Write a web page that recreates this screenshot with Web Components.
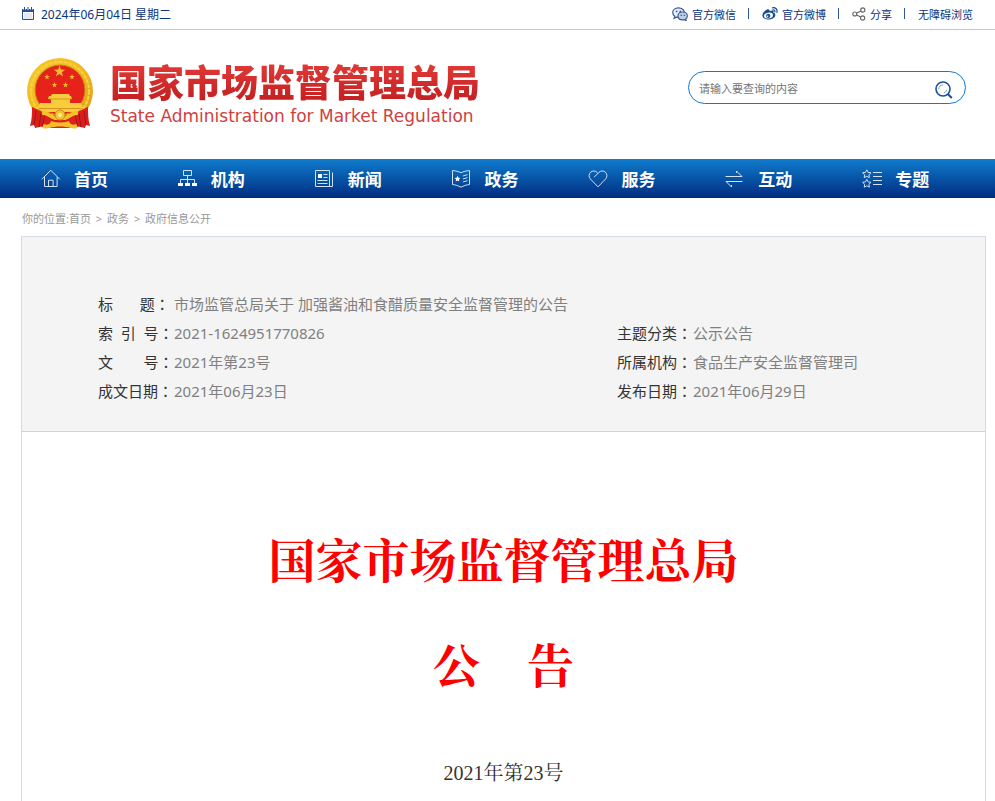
<!DOCTYPE html>
<html lang="zh-CN">
<head>
<meta charset="utf-8">
<meta name="viewport" content="width=device-width, initial-scale=1">
<title>市场监管总局关于 加强酱油和食醋质量安全监督管理的公告</title>
<style>
    html { height: 100%; }
    body {
        margin: 0;
        min-height: 100%;
        display: flex;
        flex-direction: column;
        background: #fff;
        font-family: "Noto Sans", "Noto Sans CJK SC", sans-serif;
        font-size: 11px;
        color: #333;
    }
</style>
</head>
<body>
    <top-bar>
        <span slot="date">2024年06月04日 星期二</span>
        <top-link icon="wechat">官方微信</top-link>
        <top-link icon="weibo">官方微博</top-link>
        <top-link icon="share">分享</top-link>
        <top-link>无障碍浏览</top-link>
    </top-bar>
    <site-header>
        <site-logo>
            <span slot="name">国家市场监督管理总局</span>
            <span slot="english">State Administration for Market Regulation</span>
        </site-logo>
        <site-search slot="search" placeholder="请输入要查询的内容"></site-search>
    </site-header>
    <main-nav>
        <nav-item icon="home">首页</nav-item>
        <nav-item icon="org">机构</nav-item>
        <nav-item icon="news">新闻</nav-item>
        <nav-item icon="gov">政务</nav-item>
        <nav-item icon="heart">服务</nav-item>
        <nav-item icon="swap">互动</nav-item>
        <nav-item icon="topic">专题</nav-item>
    </main-nav>
    <bread-crumb></bread-crumb>
    <notice-page>
        <doc-info slot="info">
            <doc-field class="wide" label="标　&nbsp;&nbsp;&nbsp;题">市场监管总局关于 加强酱油和食醋质量安全监督管理的公告</doc-field>
            <doc-field label="索&nbsp;&nbsp;引&nbsp;&nbsp;号">2021-1624951770826</doc-field>
            <doc-field label="主题分类">公示公告</doc-field>
            <doc-field label="文　&nbsp;&nbsp;&nbsp;&nbsp;号">2021年第23号</doc-field>
            <doc-field label="所属机构">食品生产安全监督管理司</doc-field>
            <doc-field label="成文日期">2021年06月23日</doc-field>
            <doc-field label="发布日期">2021年06月29日</doc-field>
        </doc-info>
        <span slot="title">国家市场监督管理总局</span>
        <span slot="kind">公　告</span>
        <span slot="number">2021年第23号</span>
    </notice-page>

<script>
const icons = {
    calendar: `<svg width="12" height="13" viewBox="0 0 12 13" fill="none">
        <path d="M.5 2.500h11v10H.5z" stroke="#274f93"/>
        <path d="M0 2h12v3H0z" fill="#274f93"/>
        <path d="M2.500 0v3M6 0v3M9.500 0v3" stroke="#fff" stroke-width="2"/>
        <path d="M2.500 0v3M6 0v3M9.500 0v3" stroke="#274f93"/>
        <path d="M2.500 7h7M2.500 9h7M2.500 11h7" stroke="#8fa5ca" stroke-dasharray="1 1"/></svg>`,
    wechat: `<svg width="16" height="14" viewBox="0 0 16 14" fill="#e6ecf5" stroke="#385b94" stroke-width="1.200">
        <path d="M6.500.8C3.200.8.7 2.900.7 5.600c0 1.500.8 2.800 2 3.700l-.6 2 2.200-1.200c.7.2 1.400.3 2.200.3 3.300 0 5.800-2.100 5.800-4.800S9.800.8 6.500.8z"/>
        <path fill="#c3d0e4" d="M10.700 5c-2.700 0-4.700 1.600-4.700 3.900s2 3.900 4.700 3.900c.6 0 1.100-.1 1.600-.2l1.800.9-.4-1.600c1-.7 1.600-1.800 1.600-3C15.300 6.600 13.300 5 10.700 5z"/>
        <g fill="#385b94" stroke="none"><circle cx="4.600" cy="4.300" r=".9"/><circle cx="8.300" cy="4.300" r=".9"/><circle cx="9.200" cy="8.200" r=".8"/><circle cx="12.300" cy="8.200" r=".8"/></g></svg>`,
    weibo: `<svg width="16" height="13" viewBox="0 0 16 13">
        <path fill="#174b92" d="M5.800 2.200C4 2.400.4 5.700.4 8.400c0 2.500 3 4.100 6.100 4.100 4 0 6.900-2.200 6.900-4.500 0-1.300-.9-2-2-2.300.5-1.300.2-2.100-.9-2.200-.8-.1-2 .2-2.900.6C7.700 2.700 7.100 2 5.800 2.200z"/>
        <ellipse cx="6.500" cy="8.600" rx="4.500" ry="2.900" fill="#fff" transform="rotate(-8 6.500 8.600)"/>
        <circle cx="6.200" cy="8.900" r="2.100" fill="#174b92"/><circle cx="5.600" cy="9.200" r=".7" fill="#fff"/>
        <path d="M10.500.8c3-.6 5.200 1.700 4.400 4.600M10.900 2.900c1.400-.2 2.300.8 1.900 2.100" fill="none" stroke="#174b92" stroke-width="1.200" stroke-linecap="round"/></svg>`,
    share: `<svg width="14" height="14" viewBox="0 0 14 14" fill="none" stroke="#666" stroke-width="1.100">
        <circle cx="2.800" cy="7" r="2"/><circle cx="10.800" cy="3" r="2.100"/><circle cx="10.600" cy="11" r="2.100"/>
        <path d="M4.600 6.100l4.300-2.200M4.600 8l4.200 2.100"/></svg>`,
    search: `<svg width="18" height="18" viewBox="0 0 18 18" fill="none" stroke="#1b4f97">
        <circle cx="8" cy="8" r="7" stroke-width="1.600"/>
        <path d="M12.800 13l4 4" stroke-width="2"/>
        <path d="M3.800 8.200c0-2.600 1.600-4.300 4.200-4.400M11.800 8.800c-.4 1.700-1.400 2.600-3 3" stroke="#7d9bc6"/></svg>`,
    home: `<svg viewBox="0 0 20 20"><path d="M.8 10.300L9.800 1.200l9 9.100M3.500 8v9.500h12.600V8M7.500 17.500v-6.300h4.600v6.300"/></svg>`,
    org: `<svg viewBox="0 0 20 20"><path d="M5.500 1.500h8v5h-8zM9.500 6.500v4M2.500 14v-3.500h14V14M9.500 10.500V14"/>
        <path fill="#fff" stroke="none" d="M0 14h5v3H0zM7 14h5v3H7zM14 14h5v3h-5z"/></svg>`,
    news: `<svg viewBox="0 0 20 20"><path d="M.5 1.500h14v16H.5zM14.500 17.500h3v-14M8.500 5.500h4M8.500 8.500h4M2.500 11.500h10M2.500 14.500h10"/>
        <path fill="#fff" stroke="none" d="M3 5h4v4H3z"/></svg>`,
    gov: `<svg viewBox="0 0 20 20"><path d="M.5 1.500c3 .3 6 1 8.500 2.300 2.500-1.300 5.500-2 8.500-2.300v14c-3 .3-5.700 1.200-8.500 2.700-2.800-1.500-5.500-2.400-8.500-2.700zM11 7l4.500-1.400M11 10l4.500-1.400M11 13l4.500-1.400"/>
        <path fill="#fff" stroke="none" d="M5.500 6.800l.9 1.900 2 .3-1.500 1.400.4 2.100-1.800-1-1.800 1 .4-2.100L2.600 9l2-.3z"/></svg>`,
    heart: `<svg viewBox="0 0 20 20"><path d="M10 17.800L2.300 9.900C.6 8 .7 5 2.500 3.300c2-1.900 4.900-1.700 6.700.2L10 4.400l.8-.9c1.800-1.900 4.700-2.100 6.700-.2 1.800 1.700 1.900 4.700.2 6.600zM10 4.400L6.200 8"/></svg>`,
    swap: `<svg viewBox="0 0 20 20"><path d="M.5 7.500h16.500L11.500 2v2M17.500 12.500H1L6.500 18v-2"/></svg>`,
    topic: `<svg viewBox="0 0 20 20"><path d="M4.800.8l1.300 2.600 2.900.4-2.100 2 .5 2.900-2.600-1.400-2.600 1.400.5-2.900-2.100-2 2.900-.4zM4.800 10.300l1.300 2.600 2.900.4-2.100 2 .5 2.900-2.600-1.400-2.600 1.400.5-2.900-2.100-2 2.900-.4z"/>
        <path d="M11 3.500h9M11 7.500h9M11 11.500h9M11 15.500h9"/></svg>`
};

const star = (x, y, r) => {
    const points = [];
    for (let i = 0; i < 10; i++) {
        const a = Math.PI * (i / 5 - 0.5);
        const d = i % 2 ? r * 0.4 : r;
        points.push((x + d * Math.cos(a)).toFixed(2) + ',' + (y + d * Math.sin(a)).toFixed(2));
    }
    return `<polygon points="${points.join(' ')}"/>`;
};

class TopBar extends HTMLElement {
    constructor() {
        super();
        const shadowRoot = this.attachShadow({mode: 'open'});
        shadowRoot.innerHTML = `
        <style>
            :host {
                display: flex;
                justify-content: space-between;
                align-items: center;
                height: 27px;
                padding: 0 22px 2px;
                border-bottom: 1px solid #c8c8c8;
                color: #0a3380;
            }
            .date, nav { display: flex; align-items: center; }
            .date { gap: 7px; font-size: 12px; }
            svg { display: block; }
        </style>
        <div class="date">${icons.calendar}<slot name="date"></slot></div>
        <nav aria-label="快捷链接"><slot></slot></nav>
        `;
    }
}
customElements.define('top-bar', TopBar);

class TopLink extends HTMLElement {
    constructor() {
        super();
        const shadowRoot = this.attachShadow({mode: 'open'});
        shadowRoot.innerHTML = `
        <style>
            :host { display: flex; align-items: center; }
            :host(:not(:first-of-type))::before {
                content: "";
                width: 1px;
                height: 11px;
                margin: 0 13px 0 12px;
                background: #2b5797;
            }
            a {
                display: flex;
                align-items: center;
                gap: 4px;
                color: inherit;
                text-decoration: none;
            }
            svg { display: block; }
        </style>
        <a href="#">${icons[this.getAttribute('icon')] || ''}<span><slot></slot></span></a>
        `;
    }
}
customElements.define('top-link', TopLink);

class SiteHeader extends HTMLElement {
    constructor() {
        super();
        const shadowRoot = this.attachShadow({mode: 'open'});
        shadowRoot.innerHTML = `
        <style>
            :host { display: block; }
            header {
                display: flex;
                justify-content: space-between;
                align-items: flex-start;
                padding: 27px 29px 28px 25px;
            }
            .search { padding-top: 14px; }
        </style>
        <header>
            <slot></slot>
            <div class="search"><slot name="search"></slot></div>
        </header>
        `;
    }
}
customElements.define('site-header', SiteHeader);

class SiteLogo extends HTMLElement {
    constructor() {
        super();
        const shadowRoot = this.attachShadow({mode: 'open'});
        shadowRoot.innerHTML = `
        <style>
            :host { display: flex; gap: 15px; height: 74px; }
            svg { display: block; }
            .text { padding-top: 7px; white-space: nowrap; }
            .name {
                font-family: "Liberation Sans", "Noto Sans CJK SC", sans-serif;
                font-size: 37px;
                line-height: 42px;
                font-weight: 900;
                color: #d42b2b;
                background: linear-gradient(#e03a37, #c01c1f);
                -webkit-background-clip: text;
                background-clip: text;
                -webkit-text-fill-color: transparent;
            }
            .english {
                font-family: "DejaVu Sans", sans-serif;
                font-size: 17px;
                line-height: 20px;
                color: #d04040;
            }
        </style>
        <svg width="70" height="74" viewBox="0 0 70 74" role="img" aria-label="国徽">
            <defs>
                <linearGradient id="gold" x1="0" y1="0" x2="1" y2="1">
                    <stop offset="0" stop-color="#f7c928"/><stop offset=".5" stop-color="#f2b91f"/><stop offset="1" stop-color="#d99a16"/>
                </linearGradient>
            </defs>
            <circle cx="35" cy="34" r="33" fill="url(#gold)"/>
            <circle cx="35" cy="34" r="29" fill="none" stroke="#f8d046" stroke-width="2" stroke-dasharray="4 1"/>
            <circle cx="35" cy="33" r="25" fill="#e5231b" stroke="#c99016"/>
            <g fill="#f0bb2c">${star(34.5, 14.5, 6)}${star(22, 20, 3)}${star(47, 20, 3)}${star(29.5, 28, 3)}${star(40.5, 28, 3)}</g>
            <g fill="#f8cd3b">
                <path d="M27 37h17l1 2H26zM24 39h22l1 3H23zM26 42h19v4H26zM15 46h41l2 5H12zM14 51h42l-3 4H17z"/>
            </g>
            <path d="M24 42h22M14 51.500h42" stroke="#d9931d"/>
            <path fill="#d91f1c" d="M7 50l11 5 8 1-7 13-9 2-1-3-4 1c2-6 2-13 2-19zM63 50l-11 5-8 1 7 13 9 2 1-3 4 1c-2-6-2-13-2-19z"/>
            <path d="M11 54l-2 14M16 57l-2 13M20 58l-3 12M59 54l2 14M54 57l2 13M50 58l3 12" stroke="#9f1414"/>
            <path fill="#dd221c" d="M20 58h30l2 13H18z"/>
            <path d="M17 56c8-1 10 8 18 4 8 4 10-5 18-4M18 69c6 2 8-1 10-3M52 69c-6 2-8-1-10-3" fill="none" stroke="#f4c22b" stroke-width="4"/>
            <circle cx="35" cy="58" r="5" fill="#f5c52d" stroke="#c78c18"/>
            <circle cx="35" cy="58" r="2" fill="#fff09a"/>
            <path fill="#f4bf26" d="M26 64c6 2 12 2 18 0l2 7c-7-2-15-2-22 0z"/>
        </svg>
        <div class="text">
            <div class="name"><slot name="name"></slot></div>
            <div class="english"><slot name="english"></slot></div>
        </div>
        `;
    }
}
customElements.define('site-logo', SiteLogo);

class SiteSearch extends HTMLElement {
    constructor() {
        super();
        const shadowRoot = this.attachShadow({mode: 'open'});
        shadowRoot.innerHTML = `
        <style>
            :host { display: block; }
            form {
                display: flex;
                align-items: center;
                box-sizing: border-box;
                width: 278px;
                height: 33px;
                padding: 0 12px 0 10px;
                border: 1px solid #1279c9;
                border-radius: 17px;
            }
            input {
                flex: 1;
                min-width: 0;
                padding: 2px 0 0;
                border: 0;
                outline: 0;
                background: none;
                font: inherit;
                color: #333;
            }
            input::placeholder { color: #757575; }
            button { padding: 4px 0 0; border: 0; background: none; cursor: pointer; }
            svg { display: block; }
        </style>
        <form role="search">
            <input type="text" aria-label="搜索" placeholder="${this.getAttribute('placeholder')}">
            <button type="button" aria-label="搜索">${icons.search}</button>
        </form>
        `;
    }
}
customElements.define('site-search', SiteSearch);

class MainNav extends HTMLElement {
    constructor() {
        super();
        const shadowRoot = this.attachShadow({mode: 'open'});
        shadowRoot.innerHTML = `
        <style>
            :host { display: block; background: linear-gradient(#0f7ccd, #002c80); }
            nav {
                display: grid;
                grid-template-columns: repeat(7, 1fr);
                padding: 0 16px 0 21px;
            }
        </style>
        <nav aria-label="主导航"><slot></slot></nav>
        `;
    }
}
customElements.define('main-nav', MainNav);

class NavItem extends HTMLElement {
    constructor() {
        super();
        const shadowRoot = this.attachShadow({mode: 'open'});
        shadowRoot.innerHTML = `
        <style>
            :host { display: block; }
            a {
                display: flex;
                align-items: center;
                gap: 13px;
                height: 39px;
                padding-left: 20px;
                font-size: 17px;
                font-weight: bold;
                color: #fff;
                text-decoration: none;
            }
            svg {
                width: 20px;
                height: 20px;
                fill: none;
                stroke: #d3e2f3;
                stroke-width: 1;
            }
        </style>
        <a href="#">${icons[this.getAttribute('icon')]}<span><slot></slot></span></a>
        `;
    }
}
customElements.define('nav-item', NavItem);

class BreadCrumb extends HTMLElement {
    constructor() {
        super();
        const shadowRoot = this.attachShadow({mode: 'open'});
        shadowRoot.innerHTML = `
        <style>
            :host { display: block; padding: 3px 22px 0; line-height: 35px; color: #999; }
            a { color: inherit; text-decoration: none; }
            .sep { margin: 0 2px; }
        </style>
        <nav aria-label="你的位置">你的位置:<a href="#">首页</a> <span class="sep">&gt;</span> <a href="#">政务</a> <span class="sep">&gt;</span> <a href="#">政府信息公开</a></nav>
        `;
    }
}
customElements.define('bread-crumb', BreadCrumb);

class NoticePage extends HTMLElement {
    constructor() {
        super();
        const shadowRoot = this.attachShadow({mode: 'open'});
        shadowRoot.innerHTML = `
        <style>
            :host {
                display: block;
                flex: 1;
                margin: 0 9px 0 21px;
                border: 1px solid #d3dbe8;
                border-bottom: 0;
            }
            article { padding-top: 91px; text-align: center; }
            h1, h2, p { margin: 0; font-weight: bold; }
            h1, h2 {
                font-family: "Noto Serif CJK SC", "Noto Sans CJK SC", serif;
                font-size: 47px;
                line-height: 70px;
                color: #f00;
            }
            h2 { margin-top: 35px; }
            p {
                margin-top: 60px;
                font-family: "Liberation Serif", "Noto Serif CJK SC", "Noto Sans CJK SC", serif;
                font-size: 20px;
                line-height: 30px;
                font-weight: normal;
            }
        </style>
        <slot name="info"></slot>
        <article>
            <h1><slot name="title"></slot></h1>
            <h2><slot name="kind"></slot></h2>
            <p><slot name="number"></slot></p>
        </article>
        `;
    }
}
customElements.define('notice-page', NoticePage);

class DocInfo extends HTMLElement {
    constructor() {
        super();
        const shadowRoot = this.attachShadow({mode: 'open'});
        shadowRoot.innerHTML = `
        <style>
            :host {
                display: grid;
                grid-template-columns: 64% 1fr;
                padding: 53px 76px 25px;
                background: #f4f4f4;
                border-bottom: 1px solid #d2d2d2;
                font-size: 15px;
                line-height: 29px;
            }
            ::slotted(.wide) { grid-column: 1 / -1; }
        </style>
        <slot></slot>
        `;
    }
}
customElements.define('doc-info', DocInfo);

class DocField extends HTMLElement {
    constructor() {
        super();
        const shadowRoot = this.attachShadow({mode: 'open'});
        shadowRoot.innerHTML = `
        <style>
            :host { display: flex; }
            .label { flex: none; width: 76px; color: #333; white-space: nowrap; }
            /* full-width colon sits mid-box in this face */
            .colon { font-family: "Noto Sans CJK TC", sans-serif; line-height: 16px; }
            .value { color: #808080; }
        </style>
        <span class="label">${this.getAttribute('label')}<span class="colon" lang="zh-TW">：</span></span>
        <span class="value"><slot></slot></span>
        `;
    }
}
customElements.define('doc-field', DocField);
</script>
</body>
</html>
